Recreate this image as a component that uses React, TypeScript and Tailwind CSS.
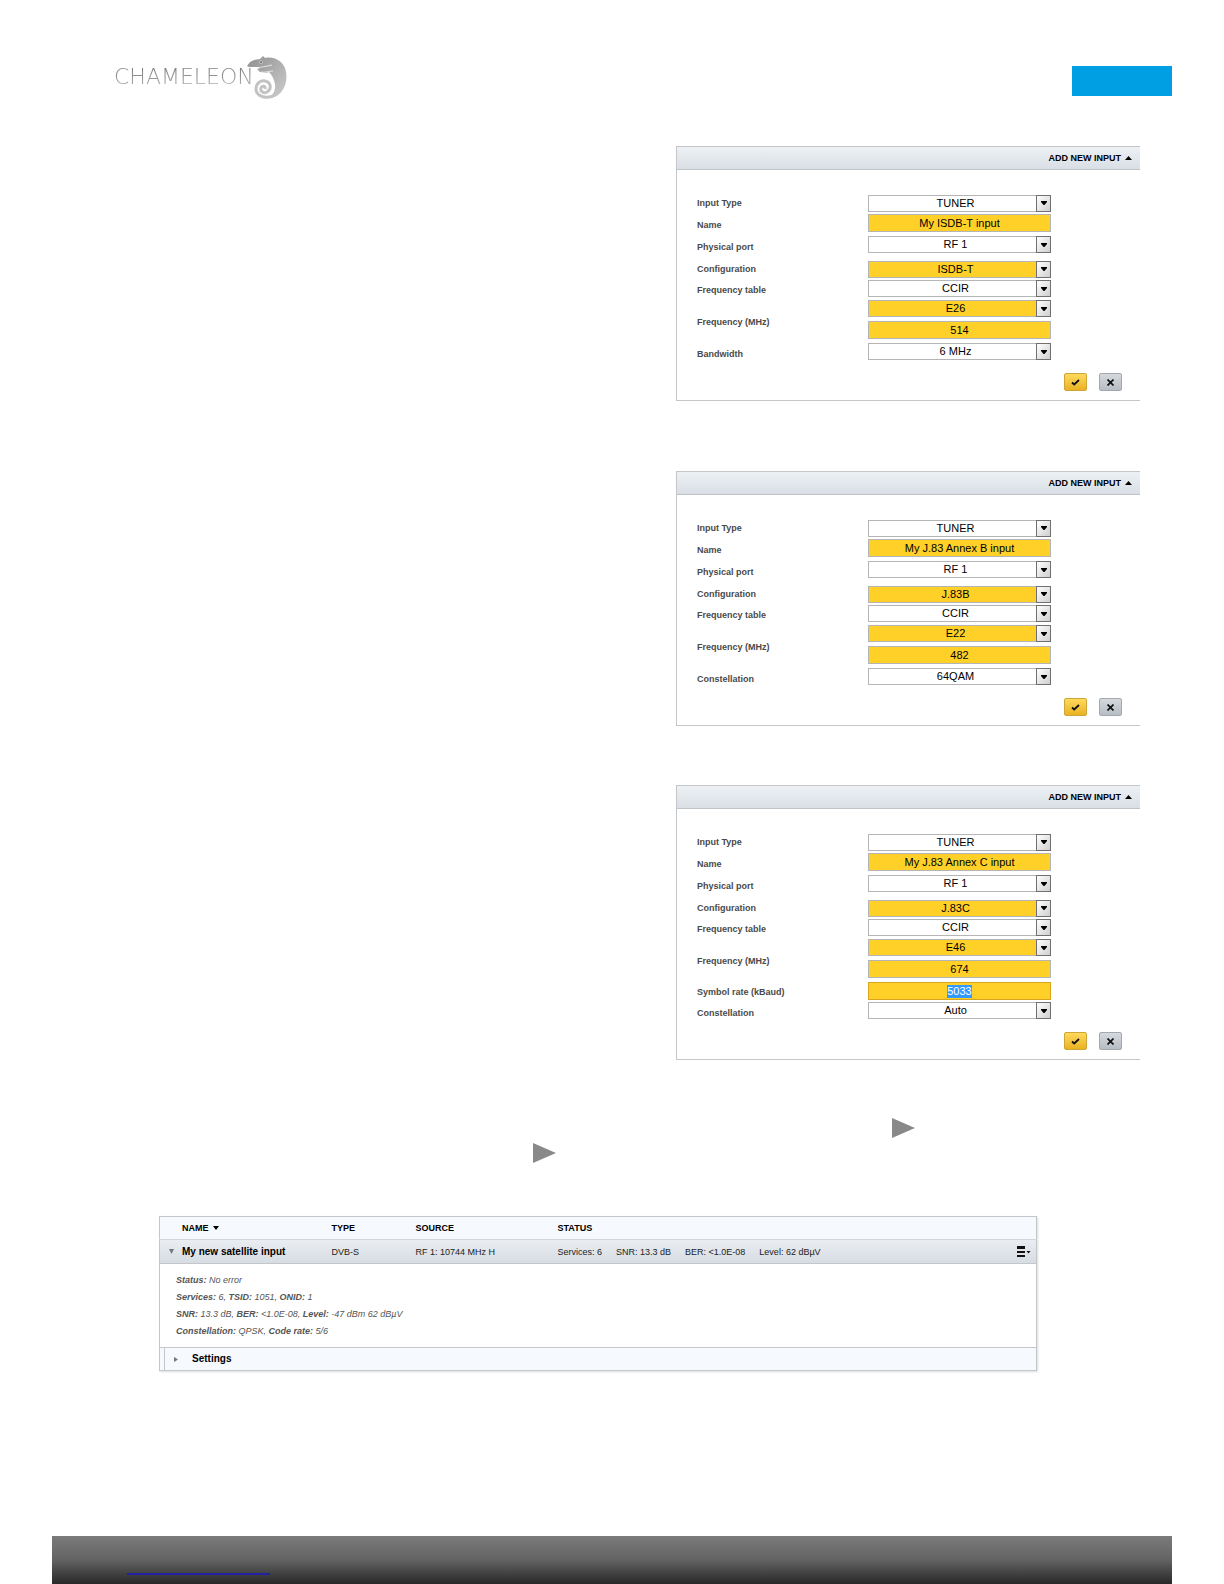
import { useId, useState } from "react";
import clsx from "clsx";

type Field = {
  value: string;
  type: "select" | "text";
  changed?: boolean;
  focused?: boolean;
};

type Row = {
  label: string;
  fields: Field[];
  className?: string;
};

const tunerRows = (name: string, configuration: string, channel: string, frequency: string): Row[] => [
  { label: "Input Type", fields: [{ type: "select", value: "TUNER" }], className: "h-[22px] items-center" },
  { label: "Name", fields: [{ type: "text", value: name, changed: true }], className: "h-[22px] items-start" },
  { label: "Physical port", fields: [{ type: "select", value: "RF 1" }], className: "h-[22px] items-start" },
  { label: "Configuration", fields: [{ type: "select", value: configuration, changed: true }], className: "h-[22px] items-center" },
  { label: "Frequency table", fields: [{ type: "select", value: "CCIR" }], className: "h-5 items-start" },
  {
    label: "Frequency (MHz)",
    fields: [
      { type: "select", value: channel, changed: true },
      { type: "text", value: frequency, changed: true },
    ],
    className: "h-[43px] items-start",
  },
];

const panels: { id: string; rows: Row[] }[] = [
  {
    id: "isdbt",
    rows: [
      ...tunerRows("My ISDB-T input", "ISDB-T", "E26", "514"),
      { label: "Bandwidth", fields: [{ type: "select", value: "6 MHz" }], className: "h-[22px] items-start" },
    ],
  },
  {
    id: "j83b",
    rows: [
      ...tunerRows("My J.83 Annex B input", "J.83B", "E22", "482"),
      { label: "Constellation", fields: [{ type: "select", value: "64QAM" }], className: "h-[22px] items-start" },
    ],
  },
  {
    id: "j83c",
    rows: [
      ...tunerRows("My J.83 Annex C input", "J.83C", "E46", "674"),
      { label: "Symbol rate (kBaud)", fields: [{ type: "text", value: "5033", changed: true, focused: true }], className: "h-5 items-start" },
      { label: "Constellation", fields: [{ type: "select", value: "Auto" }], className: "h-[22px] items-start" },
    ],
  },
];

function Logo() {
  return (
    <div className="flex items-center">
      <span className="bg-linear-to-b from-[#777777] to-[#b4b4b4] bg-clip-text font-['DejaVu_Sans',sans-serif] text-[22px] leading-6 font-extralight text-transparent">
        CHAMELEON
      </span>
      <svg width="42" height="44" viewBox="0 0 42 44" className="-ml-2">
        <defs>
          <linearGradient id="skin" x1="0" y1="0" x2="1" y2="1">
            <stop offset="0" stopColor="#8f8f8f" />
            <stop offset="1" stopColor="#cdcdcd" />
          </linearGradient>
        </defs>
        <path
          d="M1 11 L4 7 L8 5 L14 4 L17 1 L19 3 C28 1 36 6 39 13 C42 22 40 31 36 36 C33 40 29 43 23 43 C27 40 30 35 29 29 C28 24 26 20 23 17 L20 18 L14 17 L11 14 L14 12 L8 12 L3 12 Z"
          fill="url(#skin)"
        />
        <path d="M11 14 C15 11 20 12 26 10 M15 17 C19 18 22 16 27 16" fill="none" stroke="#fff" strokeWidth="0.7" />
        <circle cx="15" cy="7" r="1.6" fill="#7d7d7d" stroke="#ddd" strokeWidth="0.6" />
        <path
          d="M29 40 C20 45 10 41 10 34 C10 28 15 25 19 26 C25 27 26 34 21 37 C17 39 14 36 15 33 C16 30 20 31 19 34"
          fill="none"
          stroke="#c2c2c2"
          strokeWidth="3"
        />
      </svg>
    </div>
  );
}

function SelectField({ id, field }: { id: string; field: Field }) {
  return (
    <div className="relative h-[17px]">
      <select
        id={id}
        className={clsx(
          "block h-[17px] w-full appearance-none border border-[#b5b5b5] py-0 pr-2 text-center text-[11px] leading-[15px] text-black outline-none",
          field.changed ? "bg-[#ffd128]" : "bg-white"
        )}
      >
        <option>{field.value}</option>
      </select>
      <span className="pointer-events-none absolute top-0 right-0 flex h-[17px] w-[15px] items-center justify-center border border-[#707070] bg-linear-to-br from-white to-[#cfcfcf]">
        <svg width="6" height="4" viewBox="0 0 6 4">
          <path d="M0 0h6v1L3.500 4h-1L0 1z" fill="#000" />
        </svg>
      </span>
    </div>
  );
}

function TextField({ id, field }: { id: string; field: Field }) {
  const [value, setValue] = useState(field.value);

  return (
    <span
      className={clsx(
        "flex h-[18px] items-center justify-center border bg-[#ffd128]",
        field.focused ? "border-[#d9a520]" : "border-[#b5b5b5]"
      )}
    >
      <input
        id={id}
        value={value}
        onChange={(e) => setValue(e.target.value)}
        className={clsx(
          "p-0 text-center text-[11px] leading-[13px] outline-none",
          field.focused ? "field-sizing-content bg-[#3399ff] text-white" : "w-full text-black"
        )}
      />
    </span>
  );
}

function InputPanel({ rows }: { rows: Row[] }) {
  const id = useId();

  return (
    <section className="w-[464px] border-t border-b border-l border-[#c3c7ca] bg-white">
      <header className="flex h-[23px] items-center justify-end border-b border-[#bfc4c8] bg-linear-to-b from-[#edf1f5] to-[#d9dfe5] pr-2">
        <button type="button" className="flex items-center gap-1 text-[9px] leading-3 font-bold text-black">
          ADD NEW INPUT
          <svg width="7" height="4" viewBox="0 0 7 4">
            <path d="M3.5 0L7 4H0z" fill="#000" />
          </svg>
        </button>
      </header>
      <form className="pt-[22px] pr-[18px] pb-[9px] pl-5" onSubmit={(e) => e.preventDefault()}>
        {rows.map((row, i) => (
          <div key={row.label} className={clsx("flex", row.className)}>
            <label htmlFor={`${id}-${i}-0`} className="w-[171px] self-center text-[9px] leading-3 font-bold text-[#4a4a4a]">
              {row.label}
            </label>
            <div className="flex w-[183px] flex-col gap-1">
              {row.fields.map((field, j) =>
                field.type === "select" ? (
                  <SelectField key={j} id={`${id}-${i}-${j}`} field={field} />
                ) : (
                  <TextField key={j} id={`${id}-${i}-${j}`} field={field} />
                )
              )}
            </div>
          </div>
        ))}
        <div className="mt-2 flex justify-end gap-3">
          <button type="submit" aria-label="Apply" className="flex h-[18px] w-[23px] items-center justify-center rounded-xs border border-[#cfa53a] bg-linear-to-b from-[#ffd95a] to-[#e9b320]">
            <svg width="9" height="7" viewBox="0 0 9 7">
              <path d="M1 3.5L3.2 5.5L8 1" fill="none" stroke="#111" strokeWidth="1.8" />
            </svg>
          </button>
          <button type="button" aria-label="Cancel" className="flex h-[18px] w-[23px] items-center justify-center rounded-xs border border-[#a3a8ae] bg-linear-to-b from-[#d5d9de] to-[#b7bdc4]">
            <svg width="7" height="7" viewBox="0 0 7 7">
              <path d="M0.500 0.500L6.500 6.500M6.500 0.500L0.500 6.500" fill="none" stroke="#111" strokeWidth="1.7" />
            </svg>
          </button>
        </div>
      </form>
    </section>
  );
}

function PlayIcon() {
  return (
    <svg width="23" height="20" viewBox="0 0 23 20">
      <path d="M0 0L23 10L0 20z" fill="#898989" />
    </svg>
  );
}

function StatusTable() {
  return (
    <table className="w-full table-fixed border-collapse border border-[#c3c7ca] text-left text-[9px] leading-3 text-[#222] shadow-[1px_1px_2px_#dddddd]">
      <colgroup>
        <col className="w-[172px]" />
        <col className="w-[84px]" />
        <col className="w-[142px]" />
        <col />
        <col className="w-[19px]" />
      </colgroup>
      <thead>
        <tr className="h-[23px] border-b border-[#d3d7db] bg-[#f6f9fe] text-black">
          <th className="p-0 pl-[22px]">
            <span className="flex items-center gap-1">
              NAME
              <svg width="6" height="4" viewBox="0 0 6 4">
                <path d="M0 0h6L3 4z" fill="#000" />
              </svg>
            </span>
          </th>
          <th className="p-0">TYPE</th>
          <th className="p-0">SOURCE</th>
          <th className="p-0" colSpan={2}>STATUS</th>
        </tr>
      </thead>
      <tbody>
        <tr className="h-6 border-b border-[#c3c7ca] bg-linear-to-b from-[#eaeef2] to-[#d7dce3]">
          <td className="p-0 pl-[9px]">
            <button type="button" className="flex items-center gap-2 text-[10px] leading-3 font-bold text-black">
              <svg width="5" height="5" viewBox="0 0 5 5">
                <path d="M0 0h5L2.5 5z" fill="#777" />
              </svg>
              My new satellite input
            </button>
          </td>
          <td className="p-0">DVB-S</td>
          <td className="p-0">RF 1: 10744 MHz H</td>
          <td className="p-0">
            <div className="flex gap-[14px]">
              <span>Services: 6</span>
              <span>SNR: 13.3 dB</span>
              <span>BER: &lt;1.0E-08</span>
              <span>Level: 62 dBµV</span>
            </div>
          </td>
          <td className="p-0">
            <button type="button" aria-label="Menu" className="flex">
              <svg width="14" height="12" viewBox="0 0 14 12">
                <path d="M0 0h8v3H0zM0 5h8v2H0zM0 9h8v2H0zM9.500 5h4L11.500 7.500z" fill="#111" />
              </svg>
            </button>
          </td>
        </tr>
        <tr className="h-[84px] border-b border-[#c3c7ca] bg-white">
          <td colSpan={5} className="p-0 pl-4 leading-[17px] text-[#555] italic">
            <p><b>Status:</b> No error</p>
            <p><b>Services:</b> 6, <b>TSID:</b> 1051, <b>ONID:</b> 1</p>
            <p><b>SNR:</b> 13.3 dB, <b>BER:</b> &lt;1.0E-08, <b>Level:</b> -47 dBm 62 dBµV</p>
            <p><b>Constellation:</b> QPSK, <b>Code rate:</b> 5/6</p>
          </td>
        </tr>
        <tr className="h-[23px] bg-[#f6f9fe]">
          <td colSpan={5} className="p-0 pl-1">
            <button type="button" className="flex h-[22px] w-full items-center gap-[14px] border-l border-[#c3c7ca] pl-[9px] text-[10px] leading-3 font-bold text-black">
              <svg width="4" height="5" viewBox="0 0 4 5">
                <path d="M0 0L4 2.500L0 5z" fill="#777" />
              </svg>
              Settings
            </button>
          </td>
        </tr>
      </tbody>
    </table>
  );
}

export default function App() {
  return (
    <div className="flex min-h-screen flex-col bg-white px-[52px] font-['Liberation_Sans',Arial,sans-serif]">
      <header className="flex items-center justify-between pt-[55px] pl-[62px]">
        <Logo />
        <div className="mt-2 h-[30px] w-[100px] bg-[#009ee3]" />
      </header>

      <main className="flex flex-col">
        <div className="flex flex-col items-end pt-[47px] pr-8">
          <InputPanel rows={panels[0].rows} />
          <div className="pt-[70px] pb-[59px]">
            <InputPanel rows={panels[1].rows} />
          </div>
          <InputPanel rows={panels[2].rows} />
        </div>

        <div className="flex justify-end pt-[58px] pr-[257px]">
          <PlayIcon />
        </div>
        <div className="flex pt-[5px] pl-[481px]">
          <PlayIcon />
        </div>

        <div className="pt-[53px] pr-[135px] pl-[107px]">
          <StatusTable />
        </div>
      </main>

      <footer className="mt-auto flex h-12 items-end bg-linear-to-b from-[#7b7b7b] via-[#636363] to-[#292929] pb-[9px] pl-[75px]">
        <a href="/" aria-label="Home" className="h-4 w-[143px] border-b-2 border-[#2020a0]" />
      </footer>
    </div>
  );
}
